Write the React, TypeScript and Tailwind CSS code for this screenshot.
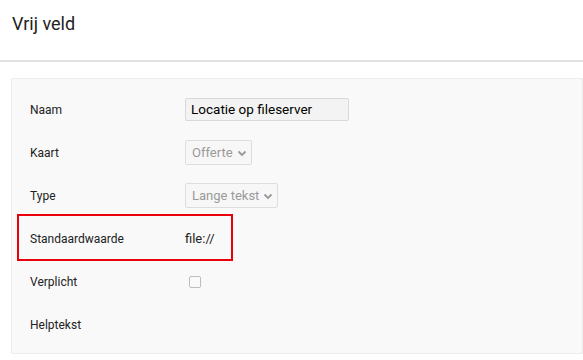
import React from 'react';

const Chevron: React.FC = () => (
  <svg width="10" height="10" viewBox="0 0 10 10" className="ml-[4px]">
    <path d="M1.5 3.5 L5 7 L8.5 3.5" fill="none" stroke="#999" strokeWidth="1.8" />
  </svg>
);

const Row: React.FC<{ label: string; children?: React.ReactNode }> = ({ label, children }) => (
  <div className="flex items-center h-[43px]">
    <div className="w-[155px] text-[12px] text-[#222]">{label}</div>
    <div className="flex items-center">{children}</div>
  </div>
);

export default function App() {
  return (
    <div className="w-[583px] h-[360px] bg-white overflow-hidden font-['Roboto',sans-serif]">
      <div className="h-[62px] border-b-2 border-[#e2e2e2] px-[12px] pt-[10px]">
        <h1 className="text-[18px] text-[#222]">Vrij veld</h1>
      </div>
      <div className="ml-[11px] mt-[16px] h-[276px] bg-[#f9f9f9] border border-[#ececec] rounded-l-[2px] pl-[18px] pt-[9px]">
        <Row label="Naam">
          <div className="w-[164px] h-[23px] bg-[#f3f3f3] border border-[#d9d9d9] rounded-[2px] px-[5px] flex items-center text-[13.5px] text-black">
            Locatie op fileserver
          </div>
        </Row>
        <Row label="Kaart">
          <div className="h-[25px] bg-[#f7f7f7] border border-[#dedede] rounded-[2px] pl-[6px] pr-[4px] flex items-center text-[13px] text-[#9a9a9a]">
            Offerte
            <Chevron />
          </div>
        </Row>
        <Row label="Type">
          <div className="h-[25px] bg-[#f7f7f7] border border-[#dedede] rounded-[2px] pl-[6px] pr-[4px] flex items-center text-[13px] text-[#9a9a9a]">
            Lange tekst
            <Chevron />
          </div>
        </Row>
        <div className="relative">
          <div className="absolute left-[-13px] top-[-3px] w-[216px] h-[47px] border-2 border-[#e8000b]" />
          <Row label="Standaardwaarde">
            <span className="text-[13px] text-[#222]">file://</span>
          </Row>
        </div>
        <Row label="Verplicht">
          <div className="ml-[4px] w-[12px] h-[12px] border border-[#bdbdbd] rounded-[2px] bg-[#fafafa]" />
        </Row>
        <Row label="Helptekst" />
      </div>
    </div>
  );
}
